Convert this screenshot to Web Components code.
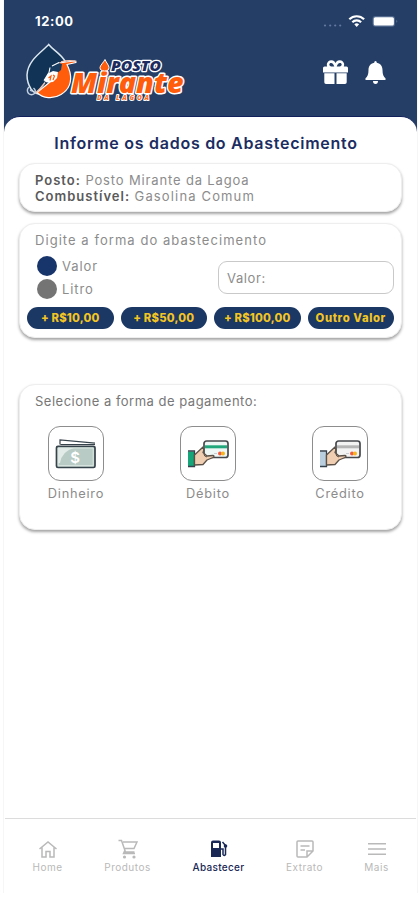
<!DOCTYPE html>
<html lang="pt-BR">
<head>
<meta charset="utf-8">
<title>Posto Mirante</title>
<style>
    body {
        margin: 0;
        background: #fff;
        font-family: Inter, "Open Sans", sans-serif;
    }
</style>
</head>
<body>
<fuel-app></fuel-app>
<script>
class StatusBar extends HTMLElement {
    connectedCallback() {
        this.attachShadow({ mode: "open" });
        this.render();
    }

    render() {
        this.shadowRoot.innerHTML = `
            <style>
                :host {
                    display: flex;
                    align-items: center;
                    height: 42px;
                    padding: 0 18px 0 31px;
                    color: #fff;
                }
                time {
                    font-size: 13px;
                    font-weight: 700;
                    letter-spacing: .6px;
                    margin-right: auto;
                }
                svg { display: block; }
            </style>
            <time>12:00</time>
            <svg width="78" height="16" viewBox="0 0 78 16">
                <g fill="#6479a0">
                    <circle cx="4" cy="12.5" r="1.1"/><circle cx="9.2" cy="12.5" r="1.1"/>
                    <circle cx="14.2" cy="12.5" r="1.1"/><circle cx="19.2" cy="12.5" r="1.1"/>
                </g>
                <g fill="none" stroke="#fff" stroke-width="2.2">
                    <path d="M28.3 6.3a10.5 10.5 0 0 1 14.8 0"/>
                    <path d="M31.3 9.3a6.2 6.2 0 0 1 8.800 0"/>
                </g>
                <path d="M33.3 11.3a3.5 3.5 0 0 1 4.8 0l-2.4 2.6z" fill="#fff"/>
                <rect x="51.5" y="3" width="22.5" height="10.8" rx="3" fill="#53698e"/>
                <rect x="52.7" y="4.2" width="20.2" height="8.4" rx="1.6" fill="#fff"/>
                <path d="M75.5 6.8q1.6 1.6 0 3.2z" fill="#7486a5"/>
            </svg>
        `;
    }
}
customElements.define("status-bar", StatusBar);

class BrandLogo extends HTMLElement {
    connectedCallback() {
        this.attachShadow({ mode: "open" });
        this.render();
    }

    render() {
        this.shadowRoot.innerHTML = `
            <style>
                :host { display: block; width: 164px; height: 64px; }
                svg { display: block; }
                text {
                    font-family: "Open Sans", sans-serif;
                    font-weight: 800;
                    font-style: italic;
                    paint-order: stroke;
                    stroke: #fff;
                    stroke-linejoin: round;
                }
            </style>
            <svg width="164" height="64" viewBox="22 40 164 64">
                <path d="M48.7 44.5C43 51 27.500 60 27 75c0 6 1.500 10 4 14 3 4 5 5 9 5l7-7 9-19 9-7C60 53 53 50 48.700 44.500z" fill="#113456" stroke="#dce6ef" stroke-width="1.500"/>
                <path d="M66 62l-7 1-4 10-5 9-13 10.500C43 98.500 53 99.500 61 94.500c8-5 11-13 9-22-1-4-2-6-3-8l9-2-1-1.500z" fill="#ff5c0c" stroke="#fff" stroke-width="1.200" stroke-linejoin="round"/>
                <path d="M51 66l8-3 3 1-1 6-5 4-7-2z" fill="#183b60"/>
                <path d="M52 66l7-3.500M50 67.500l-1 5-5 8" fill="none" stroke="#fff" stroke-width="1.100"/>
                <path d="M48 73.500l5-2.500 5 1-1 6-4 4-6 .5-3-1.500z" fill="#fff"/>
                <path d="M48.500 78l2.500-2-1 4.500M53 75l1.500 1-1.500 4" fill="none" stroke="#ff5c0c" stroke-width="1.200"/>
                <path d="M61 61.800q8-2 15.500-.3M45 82.500q-5 7-9.500 10.500" fill="none" stroke="#f6c9b7" stroke-width="1.300"/>
                <path d="M29 87q-3 3-.5 6.500 3 2.500 6 0 2-3-1-5.500M30 90l2 1" fill="none" stroke="#c3d1e2" stroke-width="1.400"/>
                <text x="111" y="70.500" font-size="14.500" textLength="50" lengthAdjust="spacingAndGlyphs" fill="#1c2c60" stroke-width="2.600">POSTO</text>
                <text x="71" y="92.500" font-size="29" textLength="112.500" lengthAdjust="spacingAndGlyphs" fill="#ff5c0c" stroke-width="3">Mirante</text>
                <path d="M105 59.500c-1.500 3-5 6-5 8q0 3.500 4.500 3.500t4.500-3.500c0-2-2.500-4.500-4-8z" fill="#ff5c0c" stroke="#fff"/>
                <text x="97" y="100" font-size="6.500" textLength="52" fill="#ff6a1c" stroke-width="1.800">DA LAGOA</text>
            </svg>
        `;
    }
}
customElements.define("brand-logo", BrandLogo);

class AppHeader extends HTMLElement {
    connectedCallback() {
        this.attachShadow({ mode: "open" });
        this.render();
    }

    render() {
        this.shadowRoot.innerHTML = `
            <style>
                :host {
                    display: block;
                    height: 132px;
                    background: #243e66;
                }
                .row {
                    display: flex;
                    align-items: center;
                    justify-content: space-between;
                    height: 60px;
                    padding: 0 31px 0 18px;
                }
                .icons { display: flex; gap: 16px; align-items: center; }
                svg { display: block; fill: #fff; }
            </style>
            <status-bar></status-bar>
            <div class="row">
                <brand-logo></brand-logo>
                <div class="icons">
                    <svg width="27" height="25" viewBox="0 0 27 25">
                        <path d="M2.500 6.500H5.200A4.300 4.300 0 0 1 13.500 3a4.300 4.300 0 0 1 8.300 3.500h2.700q1.500 0 1.500 1.500v4.500H1V8q0-1.500 1.500-1.500zM8.300 3.100c-1.900 1-.8 3.400 1 3.400h3c-.6-2.400-2.300-4.100-4-3.400zm10.400 0c-1.700-.7-3.400 1-4 3.400h3c1.800 0 2.900-2.400 1-3.400z" fill-rule="evenodd"/>
                        <path d="M2.300 13.300h10.200V24H4q-1.700 0-1.700-1.700zM14.500 13.300h10.200v9q0 1.700-1.700 1.700h-8.500z"/>
                    </svg>
                    <svg width="21" height="25" viewBox="0 0 21 25">
                        <path d="M10.500 1q1.300 0 1.300 1.800C16 3.600 17.500 7 17.500 10c0 4.500 1.100 6.600 3 8.300V20H.5v-1.700c1.900-1.700 3-3.800 3-8.300 0-3 1.500-6.400 5.700-7.200Q9.200 1 10.500 1zM8 21h5q0 3-2.500 3T8 21z"/>
                    </svg>
                </div>
            </div>
        `;
    }
}
customElements.define("app-header", AppHeader);

class InfoCard extends HTMLElement {
    connectedCallback() {
        this.attachShadow({ mode: "open" });
        this.render();
    }

    render() {
        this.shadowRoot.innerHTML = `
            <style>
                :host {
                    display: block;
                    box-sizing: border-box;
                    border: 1px solid #eee;
                    border-radius: 16px;
                    background: #fff;
                    box-shadow: 0 2px 3px rgba(0, 0, 0, .36);
                }
            </style>
            <slot></slot>
        `;
    }
}
customElements.define("info-card", InfoCard);

class RadioOption extends HTMLElement {
    connectedCallback() {
        this.attachShadow({ mode: "open" });
        this.render();
    }

    render() {
        this.shadowRoot.innerHTML = `
            <style>
                :host {
                    display: flex;
                    align-items: center;
                    gap: 5px;
                    height: 23px;
                    font-size: 13px;
                    letter-spacing: .9px;
                }
                i {
                    width: 20px;
                    height: 20px;
                    border-radius: 50%;
                    background: #747474;
                }
                :host([checked]) i { background: #18356b; }
            </style>
            <i></i><span><slot></slot></span>
        `;
    }
}
customElements.define("radio-option", RadioOption);

class AmountButton extends HTMLElement {
    connectedCallback() {
        this.attachShadow({ mode: "open" });
        this.render();
    }

    render() {
        this.shadowRoot.innerHTML = `
            <style>
                :host { display: block; }
                button {
                    display: block;
                    width: 100%;
                    height: 22px;
                    padding: 0;
                    border: none;
                    border-radius: 11px;
                    background: #1b3763;
                    color: #f2c524;
                    font: 800 11.300px Inter, sans-serif;
                    letter-spacing: .2px;
                    white-space: nowrap;
                }
                :host([wide]) button { letter-spacing: .6px; }
            </style>
            <button><slot></slot></button>
        `;
    }
}
customElements.define("amount-button", AmountButton);

const cardArt = (cuff, stripe, back) => `
    <svg width="42" height="30" viewBox="0 0 42 30">
        <rect x="17" y="2" width="24" height="16.500" rx="2.500" fill="${back}" stroke="#46484c" stroke-width="1.700"/>
        <path d="M18 6.300h22v3H18z" fill="${stripe}"/>
        <path d="M27 14.500h3" stroke="#c9ccd0"/>
        <circle cx="33" cy="14.500" r="2" fill="#ef5b43"/><circle cx="36" cy="14.500" r="2" fill="#f5b51e"/>
        <path d="M1 12.500h6v14.500H1z" fill="${cuff}"/>
        <path d="M1 12h6.500v15.500H1" fill="none" stroke="#34404c" stroke-width="1.300"/>
        <path d="M7.500 16L16 8q1.500 2.500 0 5.500l4 3.500 6-.5q2 .5 0 2l-6 2.500-4 4.500-8.500.5z" fill="#efceb1" stroke="#5b5048" stroke-width="1.300" stroke-linejoin="round"/>
        <path d="M17 15q0 2.500 3 3" fill="none" stroke="#5b5048"/>
    </svg>`;

const paymentArt = {
    cash: `
        <svg width="42" height="31" viewBox="0 0 42 31">
            <path d="M5 7V2l35 3.200v1.500H5" fill="#fff"/>
            <path d="M5 6.500V2l35 3.200M5.500 6.500H40" fill="none" stroke="#37434b" stroke-width="1.200"/>
            <rect x="1.500" y="8.300" width="38.500" height="21.200" rx="1.500" fill="#b9cbc5" stroke="#37434b" stroke-width="1.700"/>
            <path d="M3 25V10h16Q7 13 5 25z" fill="#e2ebe7"/>
            <path d="M3.200 27.700V10h35v17.700z" fill="none" stroke="#dce8e3"/>
            <text x="20.500" y="24.500" text-anchor="middle" font-size="15" font-weight="600" fill="#fff">$</text>
        </svg>`,
    debit: cardArt("#16a578", "#20a77c", "#eef7f5"),
    credit: cardArt("#b9cfe0", "#b5b5b5", "#f3f3f3"),
};

class PaymentOption extends HTMLElement {
    connectedCallback() {
        this.attachShadow({ mode: "open" });
        this.render();
    }

    render() {
        this.shadowRoot.innerHTML = `
            <style>
                :host {
                    display: flex;
                    flex-direction: column;
                    align-items: center;
                    width: 72px;
                    font-size: 12.800px;
                    line-height: 16px;
                    letter-spacing: .75px;
                }
                .box {
                    display: grid;
                    place-items: center;
                    box-sizing: border-box;
                    width: 56px;
                    height: 55px;
                    margin-bottom: 5px;
                    border: 1px solid #8d8d8d;
                    border-radius: 12px;
                }
            </style>
            <div class="box">${paymentArt[this.dataset.kind]}</div>
            <span><slot></slot></span>
        `;
    }
}
customElements.define("payment-option", PaymentOption);

const tabIcons = {
    home: `<path d="M1.500 10L10 3l8.500 7M4 8.500V18h4v-5.500h4V18h4V8.500" fill="none" stroke="currentColor" stroke-width="1.500"/>`,
    cart: `<path d="M.5 1.500h3l4 11.500h9M5 3h14l-3 6.500H7M7 11l-1.500 3.500H17" fill="none" stroke="currentColor" stroke-width="1.500"/><circle cx="6.500" cy="18" r="1.600"/><circle cx="16" cy="18" r="1.600"/>`,
    fuel: `<path d="M4 1.500h6q2 0 2 2V18H2V3.500q0-2 2-2zM4 4v5h6V4z" fill-rule="evenodd"/><path d="M12 10h2v5.500q1 2 2.500 0V6.500L13.500 3" fill="none" stroke="currentColor" stroke-width="1.500"/><circle cx="16.500" cy="7" r="1.800"/>`,
    note: `<path d="M3 2h14q1 0 1 1v9l-6 6H3q-1 0-1-1V3q0-1 1-1zM12 17.500V12h5.500M5.500 7h9M5.500 11h4.500" fill="none" stroke="currentColor" stroke-width="1.500"/>`,
    menu: `<path d="M1 4.700h18M1 10h18M1 15.300h18" fill="none" stroke="currentColor" stroke-width="1.500"/>`,
};

class TabItem extends HTMLElement {
    connectedCallback() {
        this.attachShadow({ mode: "open" });
        this.render();
    }

    render() {
        this.shadowRoot.innerHTML = `
            <style>
                :host {
                    display: flex;
                    flex-direction: column;
                    align-items: center;
                    gap: 1px;
                    color: #b9b9b9;
                    font-size: 10px;
                    line-height: 14px;
                    letter-spacing: .5px;
                }
                :host([active]) {
                    color: #1a2856;
                    font-weight: 500;
                    letter-spacing: .3px;
                }
                svg { display: block; fill: currentColor; }
            </style>
            <svg width="20" height="20" viewBox="0 0 20 20">${tabIcons[this.dataset.icon]}</svg>
            <span><slot></slot></span>
        `;
    }
}
customElements.define("tab-item", TabItem);

class TabBar extends HTMLElement {
    connectedCallback() {
        this.attachShadow({ mode: "open" });
        this.render();
    }

    render() {
        this.shadowRoot.innerHTML = `
            <style>
                :host {
                    display: grid;
                    grid-template-columns: 85px 75px 107px 65px 79px;
                    box-sizing: border-box;
                    height: 75px;
                    margin: 0 1px;
                    padding-top: 20px;
                    border-top: 1px solid #dcdcdc;
                }
            </style>
            <slot></slot>
        `;
    }
}
customElements.define("tab-bar", TabBar);

class FuelApp extends HTMLElement {
    connectedCallback() {
        this.attachShadow({ mode: "open" });
        this.render();
    }

    render() {
        this.shadowRoot.innerHTML = `
            <style>
                :host {
                    display: flex;
                    flex-direction: column;
                    box-sizing: border-box;
                    width: 413px;
                    height: 893px;
                    margin-left: 4px;
                    background: #fff;
                    box-shadow: 0 4px 2px -1px rgba(0, 0, 0, .2), 0 0 1px rgba(0, 0, 0, .15);
                    color: #8c8c8c;
                }
                main {
                    flex: 1;
                    box-sizing: border-box;
                    margin-top: -16px;
                    padding: 16px 15px 0;
                    border-top: 1px solid #11205a;
                    border-radius: 16px 16px 0 0;
                    background: #fff;
                    font-size: 13px;
                }
                h1 {
                    margin: 0 0 10px -9px;
                    text-align: center;
                    color: #1b2d62;
                    font-size: 16px;
                    font-weight: 600;
                    line-height: 20px;
                    letter-spacing: .73px;
                }
                .station {
                    height: 49px;
                    padding: 8px 15px;
                    line-height: 16px;
                    letter-spacing: .85px;
                }
                .station .grade { letter-spacing: 1.150px; }
                b {
                    color: #5a5a5a;
                    font-weight: 600;
                    letter-spacing: 1px;
                }
                .fuel { height: 115px; margin-top: 11px; padding: 6px 7px 0; }
                .fuel p {
                    margin: 0 8px;
                    line-height: 20px;
                    letter-spacing: 1.050px;
                }
                .choice {
                    display: flex;
                    justify-content: space-between;
                    margin: 4px 0 7px 10px;
                }
                .value {
                    box-sizing: border-box;
                    width: 176px;
                    height: 33px;
                    margin-top: 7px;
                    padding: 0 8px;
                    border: 1px solid #c9c9c9;
                    border-radius: 9px;
                    line-height: 32px;
                    letter-spacing: .6px;
                }
                .amounts {
                    display: grid;
                    grid-template-columns: repeat(4, 1fr);
                    gap: 7px;
                }
                .payment { height: 146px; margin-top: 46px; padding: 6px 15px 0; }
                .payment p {
                    margin: 0 0 14px;
                    line-height: 21px;
                    color: #777;
                    letter-spacing: .5px;
                }
                .options {
                    display: flex;
                    justify-content: space-between;
                    margin: 0 10px 0 5px;
                }
            </style>
            <app-header></app-header>
            <main>
                <h1>Informe os dados do Abastecimento</h1>
                <info-card class="station">
                    <b>Posto:</b> Posto Mirante da Lagoa<br>
                    <b>Combustível:</b> <span class="grade">Gasolina Comum</span>
                </info-card>
                <info-card class="fuel">
                    <p>Digite a forma do abastecimento</p>
                    <div class="choice">
                        <div>
                            <radio-option checked>Valor</radio-option>
                            <radio-option>Litro</radio-option>
                        </div>
                        <div class="value">Valor:</div>
                    </div>
                    <div class="amounts">
                        <amount-button>+ R$10,00</amount-button>
                        <amount-button>+ R$50,00</amount-button>
                        <amount-button>+ R$100,00</amount-button>
                        <amount-button wide>Outro Valor</amount-button>
                    </div>
                </info-card>
                <info-card class="payment">
                    <p>Selecione a forma de pagamento:</p>
                    <div class="options">
                        <payment-option data-kind="cash">Dinheiro</payment-option>
                        <payment-option data-kind="debit">Débito</payment-option>
                        <payment-option data-kind="credit">Crédito</payment-option>
                    </div>
                </info-card>
            </main>
            <tab-bar>
                <tab-item data-icon="home">Home</tab-item>
                <tab-item data-icon="cart">Produtos</tab-item>
                <tab-item data-icon="fuel" active>Abastecer</tab-item>
                <tab-item data-icon="note">Extrato</tab-item>
                <tab-item data-icon="menu">Mais</tab-item>
            </tab-bar>
        `;
    }
}
customElements.define("fuel-app", FuelApp);
</script>
</body>
</html>
